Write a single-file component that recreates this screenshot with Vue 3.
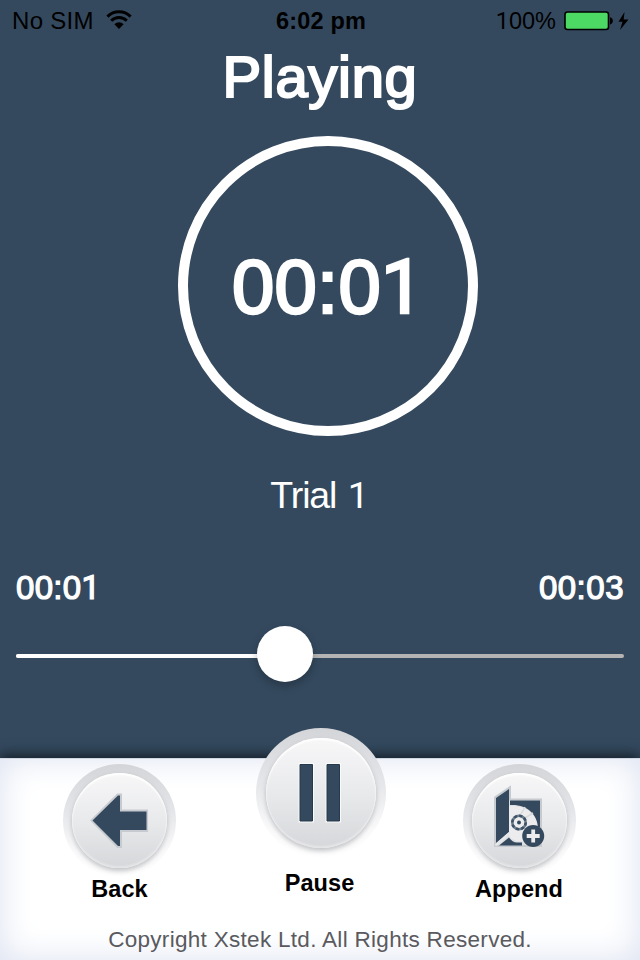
<script setup>
import { ref, computed } from 'vue'

const elapsed = ref('00:01')
const total = ref('00:03')
const trial = ref(1)
const progress = ref(0.4424)
const fillWidth = computed(() => `${progress.value * 100}%`)

// The numeral one uses a face without a foot serif.
const glyphs = (text) => [...text].map((ch) => ({ ch, one: ch === '1' }))
</script>

<template>
  <main class="screen">
    <header class="status">
      <div class="carrier">
        <span class="no-sim">No SIM</span>
        <svg class="wifi" width="26" height="20" viewBox="0 0 26 20">
          <path d="M1.4 6.600a16.400 16.400 0 0 1 23.200 0" fill="none" stroke="#000" stroke-width="2.900" />
          <path d="M5.200 10.800a11 11 0 0 1 15.600 0" fill="none" stroke="#000" stroke-width="2.900" />
          <path d="M13 19l-4.600-4.800a6.500 6.500 0 0 1 9.200 0z" />
        </svg>
      </div>
      <span class="clock">6:02 pm</span>
      <div class="power">
        <span class="percent"><span v-for="(g, i) in glyphs('100%')" :key="i" :class="{ one: g.one }">{{ g.ch }}</span></span>
        <svg class="battery" width="66" height="20" viewBox="0 0 66 20">
          <rect x="1" y="1" width="43.500" height="17.500" rx="2.500" fill="#4cd964" stroke="#000" stroke-width="1.600" />
          <path d="M46 6.200c3.800.8 3.800 6.400 0 7.200z" />
          <path d="M60.500 1L54.500 10.800h4L56 19 64.500 8.600h-4.800z" />
        </svg>
      </div>
    </header>

    <h1 class="title">Playing</h1>

    <div class="ring">
      <span class="ring-time"><span v-for="(g, i) in glyphs(elapsed)" :key="i" :class="{ one: g.one }">{{ g.ch }}</span></span>
    </div>

    <p class="track-name">Trial <span class="one">{{ trial }}</span></p>

    <div class="times">
      <span class="elapsed"><span v-for="(g, i) in glyphs(elapsed)" :key="i" :class="{ one: g.one }">{{ g.ch }}</span></span>
      <span class="total">{{ total }}</span>
    </div>

    <div class="slider">
      <div class="rail">
        <div class="fill" :style="{ width: fillWidth }"><span class="thumb"></span></div>
      </div>
    </div>

    <footer class="panel">
      <div class="controls">
        <div class="control">
          <div class="button">
            <div class="face">
              <svg class="icon" width="64" height="64" viewBox="0 0 64 64">
                <path class="halo" d="M6 31.500L31 6.500h2v16h26v18.500H33v16h-2z" />
                <path class="ink" d="M5.500 31.500L31 6.500h2v16h26.500v18.500H33v16h-2z" />
              </svg>
            </div>
          </div>
          <span class="label back">Back</span>
        </div>

        <div class="control">
          <div class="button large">
            <div class="face">
              <svg class="icon" width="64" height="64" viewBox="0 0 64 64">
                <path class="halo thin" d="M11 3.500h12.500v56.500H11zM38 3.500h12.500v56.500H38z" />
                <path class="ink bars" d="M11 3.500h12.500v56.500H11zM38 3.500h12.500v56.500H38z" />
              </svg>
            </div>
          </div>
          <span class="label pause">Pause</span>
        </div>

        <div class="control">
          <div class="button">
            <div class="face">
              <svg class="icon" width="64" height="64" viewBox="0 0 64 64">
                <path class="halo" d="M9 9L22 0v11.500h31V56H9z" />
                <path fill="#dfe0e3" d="M9 9L22 0v11.500h31V56H9z" />
                <path class="ink" d="M23 11.500h30V38h-2C50 25 40 15 23 16z" />
                <path class="ink" d="M12 56.500l10-8c2 3 5 5 8 5h5v3z" />
                <path fill="#ececee" d="M22 17c17-1 28 8 28 21l-14 14c-6 1-11-1-14-5z" />
                <path d="M34 25l4-7M38 29l8-5" stroke="#d6d8dc" stroke-width="1.500" />
                <path class="ink" d="M9 9L22 0v43L9 54z" />
                <path d="M8.500 56.500L23 43.500" stroke="#e6e7ea" stroke-width="2.200" />
                <circle cx="32" cy="33.500" r="6.700" fill="none" stroke="#6b7b89" stroke-width="2.600" />
                <circle cx="32" cy="33.500" r="6.700" fill="none" stroke="#3d5166" stroke-width="2.600" stroke-dasharray="3 2.260" />
                <circle class="plus" cx="32" cy="33.500" r="2" />
                <circle class="plus" cx="46.200" cy="47" r="11" />
                <path d="M46.200 40.500v13M39.700 47h13" stroke="#ececee" stroke-width="3.800" />
              </svg>
            </div>
          </div>
          <span class="label append">Append</span>
        </div>
      </div>
      <p class="copyright">Copyright Xstek Ltd. All Rights Reserved.</p>
    </footer>
  </main>
</template>

<style>
body {
  margin: 0;
  background: #34495e;
}
</style>

<style scoped>
.screen {
  display: flex;
  flex-direction: column;
  width: 640px;
  height: 960px;
  overflow: hidden;
  background: #34495e;
  color: #fff;
  font-family: "Liberation Sans", Arial, sans-serif;
  white-space: nowrap;
}
.one {
  font-family: Roboto, "Liberation Sans", sans-serif;
}

.status {
  display: grid;
  grid-template-columns: 1fr auto 1fr;
  height: 41px;
  padding: 0 10px 0 12px;
  line-height: 42px;
  font-size: 24px;
  color: #000;
}
.carrier {
  display: flex;
  gap: 12px;
}
.no-sim {
  letter-spacing: 0.3px;
}
.wifi {
  margin-top: 10px;
}
.clock {
  font-weight: 700;
  font-size: 23.500px;
  letter-spacing: 0.2px;
}
.power {
  display: flex;
  justify-content: flex-end;
  gap: 8px;
}
.percent {
  font-size: 23.500px;
}
.battery {
  margin-top: 11px;
}

.title {
  margin: 0;
  height: 72px;
  line-height: 72px;
  font-size: 58px;
  font-weight: 400;
  letter-spacing: 0.7px;
  text-align: center;
  -webkit-text-stroke: 2.200px #fff;
}

.ring {
  box-sizing: border-box;
  display: flex;
  justify-content: center;
  width: 300px;
  height: 300px;
  margin: 23px 0 0 178px;
  border: 10px solid #fff;
  border-radius: 50%;
}
.ring-time {
  line-height: 281px;
  font-size: 76px;
  letter-spacing: 0.300px;
  -webkit-text-stroke: 2.600px #fff;
}

.track-name {
  margin: 39px 0 0;
  height: 40px;
  padding-right: 2px;
  line-height: 40px;
  font-size: 37.500px;
  letter-spacing: -1.100px;
  word-spacing: 2px;
  text-align: center;
}

.times {
  display: flex;
  justify-content: space-between;
  height: 40px;
  margin-top: 53px;
  padding: 0 16px;
  line-height: 40px;
  font-size: 33px;
  letter-spacing: 0.300px;
  -webkit-text-stroke: 1.200px #fff;
}
.total {
  letter-spacing: 0.500px;
}

.slider {
  height: 56px;
  margin-top: 18px;
  padding: 0 16px;
}
.rail {
  height: 4px;
  margin-top: 28px;
  border-radius: 2px;
  background: #b4b4b4;
}
.fill {
  position: relative;
  height: 4px;
  border-radius: 2px;
  background: #fff;
}
.thumb {
  position: absolute;
  top: -28px;
  right: -28px;
  width: 56px;
  height: 56px;
  border-radius: 50%;
  background: #fff;
  box-shadow: 0 4px 8px rgba(0, 0, 0, 0.25);
}

.panel {
  display: flex;
  flex-direction: column;
  height: 202px;
  margin-top: 76px;
  background: #fff;
  box-shadow:
    0 -3px 12px rgba(16, 24, 32, 0.9),
    inset 0 0 34px #dbe1f0,
    inset 0 1px 0 #c5cad3;
}
.controls {
  display: grid;
  grid-template-columns: repeat(3, 200px);
  height: 162px;
  padding-left: 19px;
}
.control {
  display: flex;
  flex-direction: column;
  align-items: center;
}
.button {
  box-sizing: border-box;
  width: 113px;
  height: 113px;
  margin-top: 6px;
  padding: 9px;
  border-radius: 50%;
  background: linear-gradient(#d4d5d8, #e4e5e8 40%, #fafafb 78%, #fff);
}
.button.large {
  width: 130px;
  height: 130px;
  margin: -30px 0 0 4px;
  padding: 10px;
}
.face {
  display: flex;
  align-items: center;
  justify-content: center;
  height: 100%;
  border-radius: 50%;
  background: linear-gradient(#f7f7f8, #e8e9eb 52%, #d6d7da);
  box-shadow:
    0 3px 5px rgba(90, 92, 100, 0.35),
    inset 0 2px 2px #fff,
    inset 0 -2px 2px rgba(255, 255, 255, 0.35);
}
.ink,
.plus {
  fill: #34495e;
}
.halo {
  fill: none;
  stroke: #c7cace;
  stroke-width: 4;
}
.halo.thin {
  stroke: #fafafa;
  stroke-width: 3;
}
.bars {
  stroke: #263a4d;
  stroke-width: 1;
}
.icon {
  overflow: visible;
}
.label {
  height: 26px;
  line-height: 26px;
  font-size: 23.500px;
  font-weight: 700;
  letter-spacing: 0.1px;
  color: #000;
}
.back,
.append {
  margin-top: -1px;
}
.back {
  padding-left: 1px;
}
.pause {
  margin: 12px 0 0 1px;
}
.copyright {
  margin: 8px 0 0;
  height: 24px;
  line-height: 24px;
  font-size: 22.500px;
  letter-spacing: 0.3px;
  text-align: center;
  color: #5a5a5e;
}
</style>
